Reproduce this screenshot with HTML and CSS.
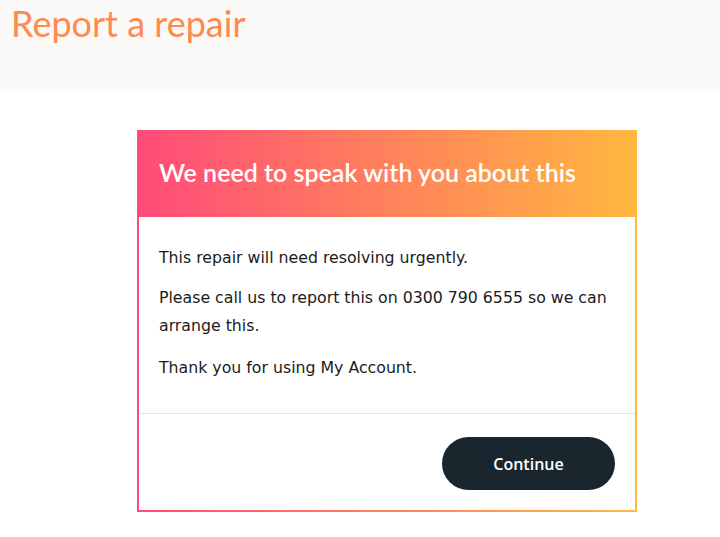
FILE: index.html
```html
<!DOCTYPE html>
<html lang="en">
<head>
<meta charset="utf-8">
<title>Report a repair</title>
<link rel="stylesheet" href="styles.css">
</head>
<body>
<header class="page-head">
  <h1 class="page-title">Report a repair</h1>
</header>
<main class="page-main">
  <section class="card">
    <div class="card-head">
      <h2 class="card-title">We need to speak with you about this</h2>
    </div>
    <div class="card-body">
      <p>This repair will need resolving urgently.</p>
      <p>Please call us to report this on 0300 790 6555 so we can arrange this.</p>
      <p>Thank you for using My Account.</p>
    </div>
    <div class="card-foot">
      <button class="btn" type="button">Continue</button>
    </div>
  </section>
</main>
</body>
</html>
```
FILE: styles.css
```css
* { box-sizing: border-box; }
html, body { margin: 0; padding: 0; background: #ffffff; }
body { font-family: "DejaVu Sans", Verdana, sans-serif; color: #1b1b1b; }

.page-head {
  background: #faf9f7;
  height: 91px;
  padding: 0 11px;
}
.page-title {
  margin: 0;
  padding-top: 1px;
  font-family: Lato, sans-serif;
  font-weight: 400;
  font-size: 36px;
  line-height: 44px;
  color: #ff8a4f;
}

.page-main {
  padding: 39px 0 0 137px;
}
.card {
  width: 500px;
  border: 2px solid;
  border-image: linear-gradient(90deg, #ff4b79, #ffb83f) 1;
  background: #ffffff;
}
.card-head {
  background: linear-gradient(90deg, #ff4b79, #ffb83f);
  height: 86px;
  margin: -1px -2px 0;
  padding: 0 22px 5px;
  display: flex;
  align-items: center;
}
.card-title {
  margin: 0;
  font-family: Lato, sans-serif;
  font-weight: 600;
  font-size: 25px;
  color: #ffffff;
}
.card-body {
  padding: 27px 20px 31px;
  border-bottom: 1px solid #e6e6e6;
  font-size: 15.75px;
  line-height: 28px;
}
.card-body p { margin: 0 0 12px; }
.card-body p + p + p { margin-top: 14px; }
.card-body p:last-child { margin-bottom: 0; }

.card-foot {
  display: flex;
  justify-content: flex-end;
  padding: 23px 20px 20px;
}
.btn {
  width: 173px;
  height: 53px;
  border: 0;
  border-radius: 27px;
  background: #19262d;
  color: #ffffff;
  font-family: "Open Sans", sans-serif;
  font-weight: 600;
  font-size: 16px;
  cursor: pointer;
}
```
